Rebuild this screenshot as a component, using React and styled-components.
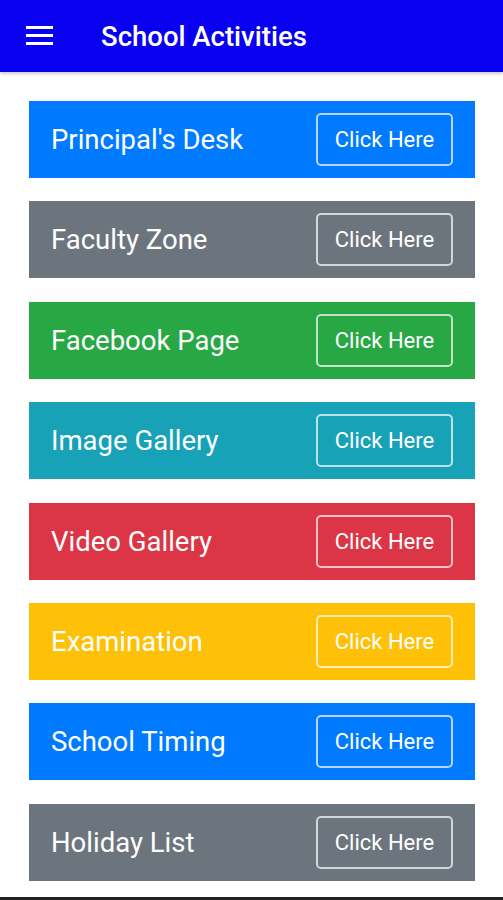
import React from 'react';
import styled, { createGlobalStyle } from 'styled-components';

const Global = createGlobalStyle`
    html, body {
        margin: 0;
        padding: 0;
        background: #fff;
        font-family: Roboto, "Liberation Sans", sans-serif;
    }
`;

const Page = styled.div`
    width: 503px;
    height: 900px;
    display: flex;
    flex-direction: column;
    overflow: hidden;
    position: relative;
`;

const Header = styled.header`
    height: 72px;
    background: #0a00f0;
    display: flex;
    align-items: center;
    padding-left: 26px;
    gap: 48px;
    box-shadow: 0 2px 3px rgba(0, 0, 0, 0.2);
    flex-shrink: 0;
`;

const Menu = styled.div`
    width: 27px;
    display: flex;
    flex-direction: column;
    gap: 5px;
    margin-bottom: 2px;

    span {
        height: 3px;
        background: #fff;
    }
`;

const Title = styled.h1`
    margin: 0;
    color: #fff;
    font-size: 27.5px;
    font-weight: 500;
`;

const List = styled.main`
    display: flex;
    flex-direction: column;
    gap: 23.4px;
    padding: 29px 28px 0 29px;
`;

const Card = styled.div`
    height: 77px;
    background: ${(p) => p.bg};
    display: flex;
    align-items: center;
    justify-content: space-between;
    padding: 0 22px 0 22px;
    flex-shrink: 0;
`;

const Label = styled.span`
    color: #fff;
    font-size: 27.5px;
    font-weight: 400;
`;

const Button = styled.button`
    width: 137px;
    height: 53px;
    border: 2px solid rgba(255, 255, 255, 0.7);
    border-radius: 5px;
    background: transparent;
    color: #fff;
    font-family: Roboto, "Liberation Sans", sans-serif;
    font-size: 22px;
    padding: 0;
`;

const BottomBar = styled.div`
    position: absolute;
    left: 0;
    right: 0;
    bottom: 0;
    height: 3px;
    background: #222;
`;

const items = [
    ["Principal's Desk", '#007bff'],
    ['Faculty Zone', '#6c757d'],
    ['Facebook Page', '#28a745'],
    ['Image Gallery', '#17a2b8'],
    ['Video Gallery', '#dc3545'],
    ['Examination', '#ffc107'],
    ['School Timing', '#007bff'],
    ['Holiday List', '#6c757d'],
];

export default function App() {
    return (
        <Page>
            <Global />
            <Header>
                <Menu>
                    <span />
                    <span />
                    <span />
                </Menu>
                <Title>School Activities</Title>
            </Header>
            <List>
                {items.map(([name, bg]) => (
                    <Card key={name} bg={bg}>
                        <Label>{name}</Label>
                        <Button>Click Here</Button>
                    </Card>
                ))}
            </List>
            <BottomBar />
        </Page>
    );
}
